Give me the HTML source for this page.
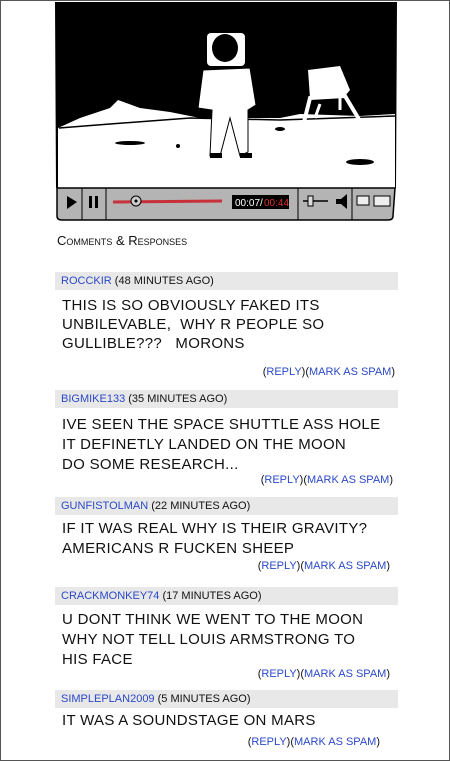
<!DOCTYPE html>
<html><head><style>
body{margin:0;width:450px;height:761px;background:#fff;position:relative;overflow:hidden;font-family:"Liberation Sans",sans-serif;color:#111}
.frame{position:absolute;left:0;top:0;width:448px;height:759px;border:1px solid #555}
.a{position:absolute;white-space:nowrap}
.h{position:absolute;left:55px;width:343px;height:18px;background:#e8e8e8;font-size:11px;line-height:18px;padding-left:6px;box-sizing:border-box}
.h b{color:#2a48c8;font-weight:normal}
.t{position:absolute;left:62px;font-size:15px;letter-spacing:0.3px}
.r{position:absolute;font-size:11px;color:#111;white-space:nowrap}
.r span{color:#2a48c8}
</style></head><body>
<div class="frame"></div>
<svg class="a" style="left:0;top:0" width="450" height="230">
<path d="M55 2 L397 2 L396 188 L56 188 Z" fill="#000"/>
<path d="M58 128 L80 118 L110 108 L118 100 L140 108 L170 112 L190 116 L200 118 L280 118 L300 114 L360 116 L395 114 L395 188 L58 188 Z" fill="#fff"/>
<path d="M59 128 L110 124 L190 118 L280 120 L395 116" stroke="#000" stroke-width="1.5" fill="none"/>
<rect x="207" y="33" width="38" height="33" rx="4" fill="#fff"/>
<ellipse cx="225" cy="48" rx="13" ry="14" fill="#000"/>
<path d="M203 70 L250 68 L256 105 L248 110 L248 152 L240 156 L230 118 L220 156 L210 156 L212 110 L198 108 Z" fill="#fff" stroke="#000"/>
<rect x="210" y="153" width="12" height="5" fill="#000"/><rect x="240" y="153" width="12" height="5" fill="#000"/>
<path d="M308 70 L340 66 L350 90 L345 96 L310 98 Z" fill="#fff"/>
<path d="M303 126 L310 98 L345 96 L363 126" stroke="#fff" stroke-width="4" fill="none"/>
<path d="M315 118 L320 104 M340 96 L340 110" stroke="#fff" stroke-width="3"/>
<ellipse cx="130" cy="143" rx="15" ry="2" fill="#000"/><circle cx="178" cy="146" r="2" fill="#000"/><ellipse cx="280" cy="129" rx="5" ry="2" fill="#000"/><ellipse cx="360" cy="162" rx="14" ry="3" fill="#000"/>
<path d="M57 188 L395 188 L393 216 Q393 220 388 220 L62 220 Q57 220 57 216 Z" fill="#b4b4b4" stroke="#000" stroke-width="1.5"/>
<path d="M82 188 V220 M106 188 V220 M298 188 V220 M352 188 V220" stroke="#000" stroke-width="1"/>
<path d="M67 196 L77 202 L67 209 Z" fill="#000"/>
<rect x="89" y="196" width="3" height="12" fill="#000"/><rect x="95" y="196" width="3" height="12" fill="#000"/>
<path d="M113 202 L222 201" stroke="#c8303a" stroke-width="3"/>
<circle cx="136" cy="201" r="5" fill="#ccc" stroke="#000"/><circle cx="136" cy="201" r="1.5" fill="#000"/>
<rect x="232" y="195" width="57" height="14" fill="#000"/>
<text x="235" y="206" font-size="10" fill="#fff" font-family="Liberation Sans">00:07/</text>
<text x="264" y="206" font-size="10" fill="#e03030" font-family="Liberation Sans">00:44</text>
<path d="M303 201 L328 201" stroke="#000" stroke-width="1.5"/><rect x="308" y="196" width="5" height="10" fill="#ddd" stroke="#000"/>
<path d="M336 199 L341 199 L347 194 L347 209 L341 204 L336 204 Z" fill="#000"/>
<rect x="357" y="196" width="12" height="9" fill="#eee" stroke="#000"/>
<rect x="374" y="196" width="16" height="10" fill="#eee" stroke="#000"/>
</svg>
<div class="a" style="left:57px;top:233px;font-size:13px;font-variant:small-caps">Comments &amp; Responses</div>

<div class="h" style="top:272px"><b>ROCCKIR</b> (48 MINUTES AGO)</div>
<div class="t" style="top:296px;line-height:19px">THIS IS SO OBVIOUSLY FAKED ITS<br>UNBILEVABLE, &nbsp;WHY R PEOPLE SO<br>GULLIBLE??? &nbsp;&nbsp;MORONS</div>
<div class="r" style="right:55px;top:366px">(<span>REPLY</span>)(<span>MARK AS SPAM</span>)</div>

<div class="h" style="top:390px"><b>BIGMIKE133</b> (35 MINUTES AGO)</div>
<div class="t" style="top:415px;line-height:20px">IVE SEEN THE SPACE SHUTTLE ASS HOLE<br>IT DEFINETLY LANDED ON THE MOON<br>DO SOME RESEARCH...</div>
<div class="r" style="right:57px;top:474px">(<span>REPLY</span>)(<span>MARK AS SPAM</span>)</div>

<div class="h" style="top:497px"><b>GUNFISTOLMAN</b> (22 MINUTES AGO)</div>
<div class="t" style="top:519px;line-height:20px">IF IT WAS REAL WHY IS THEIR GRAVITY?<br>AMERICANS R FUCKEN SHEEP</div>
<div class="r" style="right:60px;top:560px">(<span>REPLY</span>)(<span>MARK AS SPAM</span>)</div>

<div class="h" style="top:587px"><b>CRACKMONKEY74</b> (17 MINUTES AGO)</div>
<div class="t" style="top:610px;line-height:20px">U DONT THINK WE WENT TO THE MOON<br>WHY NOT TELL LOUIS ARMSTRONG TO<br>HIS FACE</div>
<div class="r" style="right:60px;top:668px">(<span>REPLY</span>)(<span>MARK AS SPAM</span>)</div>

<div class="h" style="top:690px"><b>SIMPLEPLAN2009</b> (5 MINUTES AGO)</div>
<div class="t" style="top:711px;line-height:20px">IT WAS A SOUNDSTAGE ON MARS</div>
<div class="r" style="right:70px;top:736px">(<span>REPLY</span>)(<span>MARK AS SPAM</span>)</div>
</body></html>
